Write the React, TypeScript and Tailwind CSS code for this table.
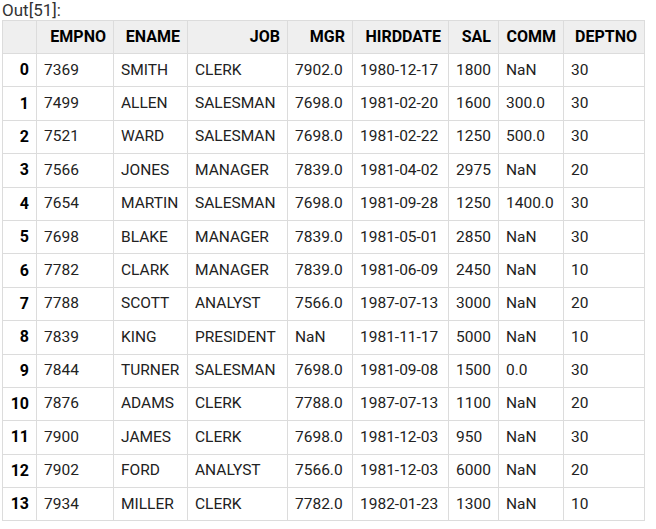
import React from 'react';

const cols = ['EMPNO', 'ENAME', 'JOB', 'MGR', 'HIRDDATE', 'SAL', 'COMM', 'DEPTNO'];
const widths = ['w-[34px]', 'w-[77px]', 'w-[74px]', 'w-[100px]', 'w-[65px]', 'w-[96px]', 'w-[50px]', 'w-[65px]', 'w-[81px]'];

const rows = [
  ['7369', 'SMITH', 'CLERK', '7902.0', '1980-12-17', '1800', 'NaN', '30'],
  ['7499', 'ALLEN', 'SALESMAN', '7698.0', '1981-02-20', '1600', '300.0', '30'],
  ['7521', 'WARD', 'SALESMAN', '7698.0', '1981-02-22', '1250', '500.0', '30'],
  ['7566', 'JONES', 'MANAGER', '7839.0', '1981-04-02', '2975', 'NaN', '20'],
  ['7654', 'MARTIN', 'SALESMAN', '7698.0', '1981-09-28', '1250', '1400.0', '30'],
  ['7698', 'BLAKE', 'MANAGER', '7839.0', '1981-05-01', '2850', 'NaN', '30'],
  ['7782', 'CLARK', 'MANAGER', '7839.0', '1981-06-09', '2450', 'NaN', '10'],
  ['7788', 'SCOTT', 'ANALYST', '7566.0', '1987-07-13', '3000', 'NaN', '20'],
  ['7839', 'KING', 'PRESIDENT', 'NaN', '1981-11-17', '5000', 'NaN', '10'],
  ['7844', 'TURNER', 'SALESMAN', '7698.0', '1981-09-08', '1500', '0.0', '30'],
  ['7876', 'ADAMS', 'CLERK', '7788.0', '1987-07-13', '1100', 'NaN', '20'],
  ['7900', 'JAMES', 'CLERK', '7698.0', '1981-12-03', '950', 'NaN', '30'],
  ['7902', 'FORD', 'ANALYST', '7566.0', '1981-12-03', '6000', 'NaN', '20'],
  ['7934', 'MILLER', 'CLERK', '7782.0', '1982-01-23', '1300', 'NaN', '10'],
];

export default function App() {
  return (
    <div className="w-[656px] h-[529px] bg-white px-[2px] font-['Roboto',sans-serif] text-[15.5px] text-[#222]">
      <div className="h-[20px] leading-[20px] text-[17px] text-[#333]">Out[51]:</div>
      <table className="w-[642px] table-fixed border-collapse">
        <colgroup>
          {widths.map((w, i) => (
            <col key={i} className={w} />
          ))}
        </colgroup>
        <thead>
          <tr className="h-[33px] bg-[#efefef]">
            <th className="border border-[#dcdcdc]"></th>
            {cols.map((c) => (
              <th key={c} className="border border-[#dcdcdc] px-[7px] text-right text-[16px] font-bold text-black whitespace-nowrap overflow-hidden">
                {c}
              </th>
            ))}
          </tr>
        </thead>
        <tbody>
          {rows.map((r, i) => (
            <tr key={i} className="h-[33.4px]">
              <td className="border border-[#dcdcdc] px-[7px] text-right text-[16px] font-bold text-black">{i}</td>
              {r.map((v, j) => (
                <td key={j} className="border border-[#dcdcdc] px-[7px] text-left whitespace-nowrap overflow-hidden">
                  {v}
                </td>
              ))}
            </tr>
          ))}
        </tbody>
      </table>
    </div>
  );
}
